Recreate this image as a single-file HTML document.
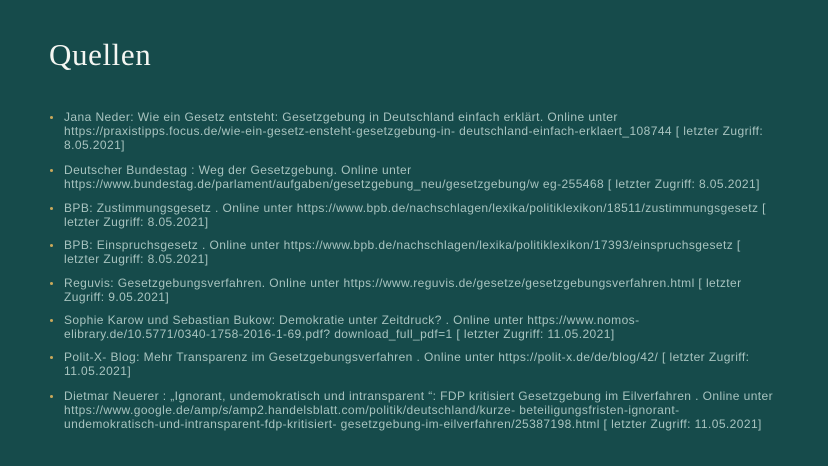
<!DOCTYPE html>
<html><head><meta charset="utf-8"><style>
html,body{margin:0;padding:0;}
body{width:828px;height:466px;background:#164b4b;position:relative;overflow:hidden;font-family:"Liberation Sans",sans-serif;}
h1{position:absolute;left:49px;top:37px;margin:0;font-family:"Liberation Serif",serif;font-weight:normal;font-size:31px;color:#f4f6f2;letter-spacing:0.6px;}
.it{position:absolute;left:64px;font-size:12px;letter-spacing:0.42px;line-height:14px;color:#a7c3bf;white-space:nowrap;}
.it:before{content:"";position:absolute;left:-14px;top:6px;width:3px;height:3px;border-radius:50%;background:#c9a85a;}
</style></head><body>
<h1>Quellen</h1>
<div class="it" style="top:110px">Jana Neder: Wie ein Gesetz entsteht: Gesetzgebung in Deutschland einfach erklärt. Online unter<br>https://praxistipps.focus.de/wie-ein-gesetz-ensteht-gesetzgebung-in- deutschland-einfach-erklaert_108744 [ letzter Zugriff:<br>8.05.2021]</div>
<div class="it" style="top:163px">Deutscher Bundestag : Weg der Gesetzgebung. Online unter<br>https://www.bundestag.de/parlament/aufgaben/gesetzgebung_neu/gesetzgebung/w eg-255468 [ letzter Zugriff: 8.05.2021]</div>
<div class="it" style="top:201px">BPB: Zustimmungsgesetz . Online unter https://www.bpb.de/nachschlagen/lexika/politiklexikon/18511/zustimmungsgesetz [<br>letzter Zugriff: 8.05.2021]</div>
<div class="it" style="top:238px">BPB: Einspruchsgesetz . Online unter https://www.bpb.de/nachschlagen/lexika/politiklexikon/17393/einspruchsgesetz [<br>letzter Zugriff: 8.05.2021]</div>
<div class="it" style="top:276px">Reguvis: Gesetzgebungsverfahren. Online unter https://www.reguvis.de/gesetze/gesetzgebungsverfahren.html [ letzter<br>Zugriff: 9.05.2021]</div>
<div class="it" style="top:313px">Sophie Karow und Sebastian Bukow: Demokratie unter Zeitdruck? . Online unter https://www.nomos-<br>elibrary.de/10.5771/0340-1758-2016-1-69.pdf? download_full_pdf=1 [ letzter Zugriff: 11.05.2021]</div>
<div class="it" style="top:350px">Polit-X- Blog: Mehr Transparenz im Gesetzgebungsverfahren . Online unter https://polit-x.de/de/blog/42/ [ letzter Zugriff:<br>11.05.2021]</div>
<div class="it" style="top:389px">Dietmar Neuerer : „Ignorant, undemokratisch und intransparent “: FDP kritisiert Gesetzgebung im Eilverfahren . Online unter<br>https://www.google.de/amp/s/amp2.handelsblatt.com/politik/deutschland/kurze- beteiligungsfristen-ignorant-<br>undemokratisch-und-intransparent-fdp-kritisiert- gesetzgebung-im-eilverfahren/25387198.html [ letzter Zugriff: 11.05.2021]</div>
</body></html>
